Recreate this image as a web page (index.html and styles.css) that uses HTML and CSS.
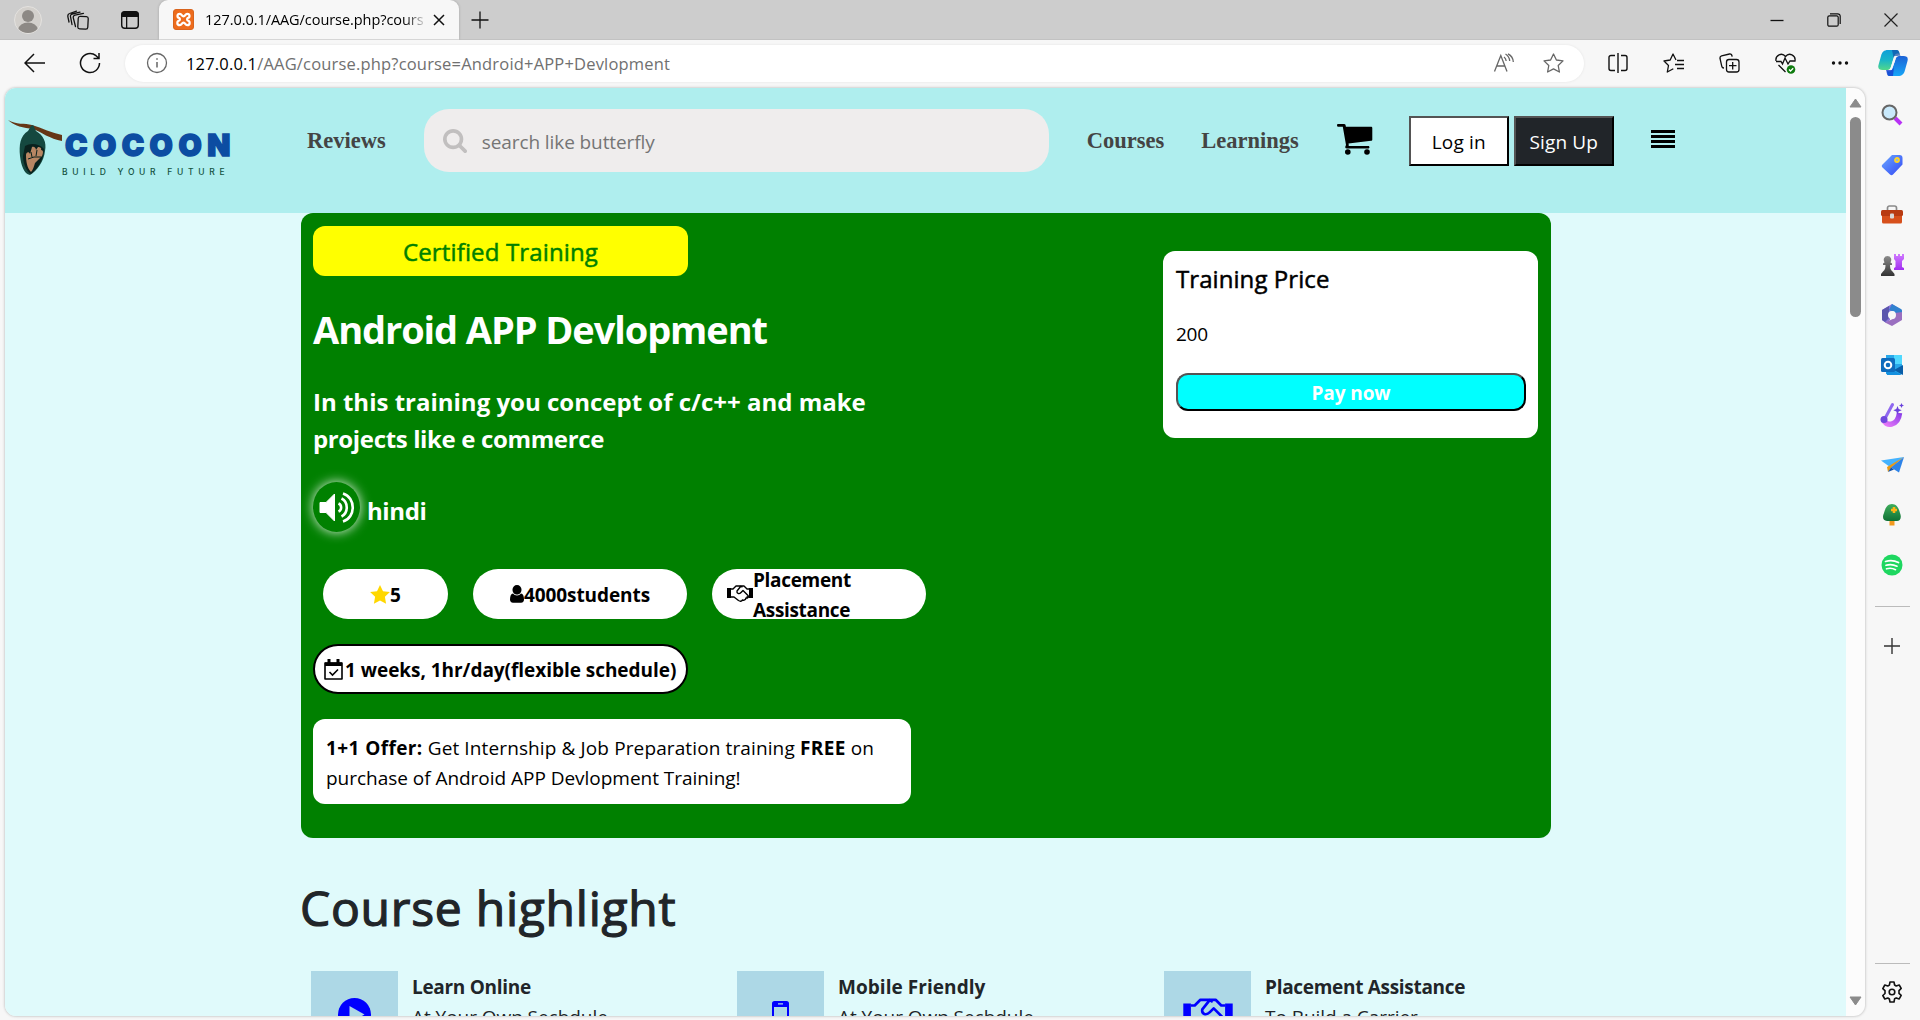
FILE: index.html
```html
<!DOCTYPE html>
<html lang="en">
<head>
<meta charset="utf-8">
<title>127.0.0.1/AAG/course.php</title>
<link rel="stylesheet" href="styles.css">
</head>
<body>
<svg class="defs" width="0" height="0">
  <defs>
    <linearGradient id="gTag" x1="0" y1="0" x2="1" y2="1"><stop offset="0" stop-color="#6aa8ff"/><stop offset="1" stop-color="#3347f5"/></linearGradient>
    <linearGradient id="gPurple" x1="0" y1="0" x2="0" y2="1"><stop offset="0" stop-color="#d07bff"/><stop offset="1" stop-color="#a12ef0"/></linearGradient>
    <linearGradient id="gDesign" x1="0" y1="1" x2="1" y2="0"><stop offset="0" stop-color="#e879f9"/><stop offset="1" stop-color="#8b3fe8"/></linearGradient>
    <linearGradient id="gCopA" x1="0" y1="0" x2="0" y2="1"><stop offset="0" stop-color="#0f9fd8"/><stop offset=".5" stop-color="#19b5c8"/><stop offset="1" stop-color="#52d88a"/></linearGradient>
    <linearGradient id="gCopB" x1="0" y1="0" x2="0" y2="1"><stop offset="0" stop-color="#1c62d6"/><stop offset="1" stop-color="#17a6f7"/></linearGradient>
    <linearGradient id="gPawn" x1="0" y1="0" x2="0" y2="1"><stop offset="0" stop-color="#8c8c8c"/><stop offset="1" stop-color="#333"/></linearGradient>
    <linearGradient id="gTree" x1="0" y1="0" x2="0" y2="1"><stop offset="0" stop-color="#3fae5c"/><stop offset="1" stop-color="#0f7034"/></linearGradient>
    <symbol id="handshake" viewBox="0 0 52 40">
      <path d="M0 8h8v20H0zM44 8h8v20h-8z" fill="currentColor"/>
      <path d="M8 10h4l6-6h9l4 2M44 10h-4l-6-6h-6l-8 10c-1 5 4 7 8 3l4-4 10 10c2 3-1 6-4 5-1 4-4 5-7 4-2 3-5 3-8 1L14 26H8M44 26h-5" fill="none" stroke="currentColor" stroke-width="2.8" stroke-linejoin="round"/>
    </symbol>
  </defs>
</svg>
<div class="browser">
  <div class="tabstrip">
    <svg class="avatar" width="28" height="28" viewBox="0 0 28 28"><circle cx="14" cy="14" r="13.5" fill="#d3d0cc" stroke="#e4e2df"/><circle cx="14" cy="10" r="6" fill="#8d8985"/><path d="M4.500 23a9.500 6.500 0 0 1 19 0 13.500 13.500 0 0 1-19 0z" fill="#8d8985"/></svg>
    <svg class="workspaces" width="22" height="20" viewBox="0 0 22 20" fill="none" stroke="#111" stroke-width="1.300" stroke-linecap="round"><rect x="11" y="6.500" width="10" height="12.500" rx="2" transform="rotate(3 16 13)"/><path d="M8.500 16.500 6.300 7.800a2.200 2.200 0 0 1 1.700-2.700l8.500-1.800M5 14.500 3.500 6.700A2.200 2.200 0 0 1 5.200 4L13 2.200M2 12 .9 6.800c-.3-1.700.3-2.900 1.700-3.300L9.500 1.200"/></svg>
    <svg class="tabmenu" width="20" height="20" viewBox="0 0 20 20"><rect x="1.700" y="1.700" width="16.600" height="16.600" rx="3" fill="none" stroke="#111" stroke-width="1.400"/><path d="M1.500 7V4a2.500 2.500 0 0 1 2.500-2.500h12A2.500 2.500 0 0 1 18.500 4v3zM6 6h1.300v12H6z" fill="#111"/></svg>
    <div class="tab">
      <svg width="21" height="21" viewBox="0 0 21 21"><rect x=".5" y=".5" width="20" height="20" rx="2.500" fill="#ee6c1c" stroke="#d8641d"/><path d="M6.800 4.800c-3 0-3 3.700-.5 4.200.8.500.8 2 0 2.500-2.700.6-2.700 4.700.5 4.700 2.200 0 1.700-2.500 3.700-2.500s1.500 2.500 3.700 2.500c3.200 0 3.200-4.100.5-4.700-.8-.5-.8-2 0-2.500 2.500-.5 2.500-4.200-.5-4.200-2.200 0-1.700 2.500-3.700 2.500S9 4.800 6.800 4.800z" fill="none" stroke="#fff" stroke-width="2.200"/></svg>
      <span class="tab-title">127.0.0.1/AAG/course.php?cours</span>
      <svg class="tab-close" width="12" height="12" viewBox="0 0 12 12" stroke="#111" stroke-width="1.500"><path d="M1 1l10 10M11 1 1 11"/></svg>
    </div>
    <svg class="newtab" width="18" height="18" viewBox="0 0 18 18" stroke="#111" stroke-width="1.300"><path d="M9 .5v17M.5 9h17"/></svg>
    <div class="winctl">
      <svg width="14" height="14" viewBox="0 0 14 14" stroke="#111" stroke-width="1.300"><path d="M.5 7.500h13"/></svg>
      <svg width="14" height="14" viewBox="0 0 14 14" fill="none" stroke="#111" stroke-width="1.200"><rect x=".8" y="2.800" width="10.400" height="10.400" rx="1.500"/><path d="M3 .8h7.700a2.500 2.500 0 0 1 2.500 2.500V11"/></svg>
      <svg width="14" height="14" viewBox="0 0 14 14" stroke="#222" stroke-width="1.200"><path d="M.5.5l13 13M13.500.5l-13 13"/></svg>
    </div>
  </div>

  <div class="toolbar">
    <svg class="back" width="21" height="20" viewBox="0 0 21 20" fill="none" stroke="#111" stroke-width="1.500"><path d="M21 10H1.500M10 1 1 10l9 9"/></svg>
    <svg class="reload" width="22" height="22" viewBox="0 0 22 22" fill="none" stroke="#111" stroke-width="1.500"><path d="M20.500 11a9.500 9.500 0 1 1-3.500-7.300L19.500 6M20 1v5.500h-5.500"/></svg>
    <div class="address">
      <svg width="22" height="22" viewBox="0 0 22 22" fill="none" stroke="#666" stroke-width="1.300"><circle cx="11" cy="11" r="9.500"/><path d="M11 10v5.500M11 6.200v1.600" stroke-width="1.500"/></svg>
      <span class="url"><b>127.0.0.1</b>/AAG/course.php?course=Android+APP+Devlopment</span>
      <svg class="read" width="22" height="20" viewBox="0 0 22 20" fill="none" stroke="#666" stroke-width="1.300"><path d="M1.500 18.500 7.800 2.500l6.200 16M3.800 13h8M12.500 1c2.500 1.500 4 4 4.200 7M15 .8c3.300 1.700 5.200 4.700 5.300 8.200M11 4c1.300 1 2 2.200 2.200 4"/></svg>
      <svg width="21" height="20" viewBox="0 0 21 20" fill="none" stroke="#666" stroke-width="1.300" stroke-linejoin="round"><path d="m10.500 1 2.900 6 6.600.9-4.800 4.600 1.200 6.500-5.900-3.100L4.600 19l1.200-6.500L1 7.900 7.600 7z"/></svg>
    </div>
    <div class="tools">
      <svg width="20" height="20" viewBox="0 0 20 20" fill="none" stroke="#111" stroke-width="1.400"><path d="M10 0v20M7 2.500H3a2 2 0 0 0-2 2v11a2 2 0 0 0 2 2h4M13 2.500h4a2 2 0 0 1 2 2v11a2 2 0 0 1-2 2h-4"/></svg>
      <svg width="21" height="20" viewBox="0 0 21 20" fill="none" stroke="#111" stroke-width="1.300" stroke-linejoin="round"><path d="M13 7 10 1 7.200 7 1 8l4.500 4.500L4.300 19l6-3.200M14 7.500h7M12 11.500h9M14 15.500h7"/></svg>
      <svg width="21" height="20" viewBox="0 0 21 20" fill="none" stroke="#111" stroke-width="1.300"><rect x="7.500" y="6.500" width="12.500" height="12.500" rx="2.500"/><path d="M13.700 9v7.500M10 12.700h7.500M5 15c-1 0-2-.5-2.200-1.700L1 5.500c-.2-1.300.3-2.200 1.600-2.600L10.500 1c1.300-.2 2.300.4 2.700 2.700"/></svg>
      <svg width="21" height="21" viewBox="0 0 21 21" fill="none" stroke="#111" stroke-width="1.300"><path d="M1 8C0 2 7-1 10.500 3.500 14-1 21 2 20 8h-5l-2 3-3-6-2.500 6L6 8.500H1M3.500 12l7 7"/><circle cx="16" cy="16.500" r="4.300" fill="#0f7b0f" stroke="none"/><path d="m14 16.500 1.500 1.500 2.700-2.700" stroke="#fff"/></svg>
      <svg width="18" height="18" viewBox="0 0 18 18" fill="#111"><circle cx="2.500" cy="9" r="1.700"/><circle cx="9" cy="9" r="1.700"/><circle cx="15.500" cy="9" r="1.700"/></svg>
      <svg class="copilot" width="30" height="28" viewBox="0 0 30 28"><path d="M19 1h-9C6 1 4 3 3 7L.5 16c-1 4 1 5 4 5h5c2 0 3-1 4-5l3-9c.5-2 2-3 5-2-.5-3-1.500-4-2.500-4z" fill="url(#gCopA)"/><path d="M11 27h9c4 0 6-2 7-6l2.500-9c1-4-1-5-4-5h-4c-3 0-3.500 1-4.500 5l-3 8c-.7 2-2 3-5 2 .5 3 1 5 2 5z" fill="url(#gCopB)"/><path d="M14 1h5c2 0 2.500 3 3.500 6-3-1-5 0-6.500 4z" fill="#124fa8" opacity=".7"/><path d="M8 21h6l2-3-1 9h-4c-2 0-2-3-3-6z" fill="#163ed0" opacity=".8"/><path d="M17 7h4c-2 0-3 1-3.700 4l-2.800 8c-.5 1.500-1.200 2-2.500 2H9.500c2 0 3-1 4-5l2-7c.3-1.300.7-2 1.500-2z" fill="#f7f7f7"/></svg>
    </div>
  </div>

  <div class="main">
    <div class="frame">
      <div class="page">
        <header class="nav">
          <div class="logo">
            <svg width="55" height="56" viewBox="0 0 55 56"><path d="M0 0c8 5 17 3 24 5 10 3 20 8 30 10v6c-12-2-21-9-29-12C16 8 6 6 0 0z" fill="#653616"/><path d="M23 6c1-1 3-1 3 1l2 4c7 4 11 11 9 20-1 10-8 20-15 24-6-1-9-10-10-19-1-11 0-20 8-25z" fill="#15483f"/><path d="M17 26c5-3 14-3 19 3 0 9-5 18-13 25-5-3-8-11-8-18z" fill="#0a211d"/><path d="M18 35c0-3 3-4 4-1l2-7c2-1 4 1 4 3l2-3c2 0 4 1 3 3 3 0 2 4 1 6l-7 7c-1 3-2 7-4 9-4-4-5-11-5-17z" fill="#b88663"/><path d="M20 39l6-2 7 0M23 32l1 5M29 30l-1 6" stroke="#0a211d" fill="none"/></svg>
            <div class="wordmark"><strong>COCOON</strong><small>BUILD YOUR FUTURE</small></div>
          </div>
          <a class="link reviews">Reviews</a>
          <div class="search">
            <svg width="24" height="24" viewBox="64 128 1664 1664"><path fill="#c1bfbf" d="M1216 832q0-185-131.500-316.500T768 384 451.500 515.500 320 832t131.500 316.500T768 1280t316.500-131.500T1216 832zm512 832q0 52-38 90t-90 38q-54 0-90-38l-343-342q-179 124-399 124-143 0-273.500-55.500t-225-150-150-225T64 832t55.500-273.500 150-225 225-150T768 128t273.500 55.500 225 150 150 225T1472 832q0 220-124 399l343 343q37 37 37 90z"/></svg>
            <span class="placeholder">search like butterfly</span>
          </div>
          <a class="link courses">Courses</a>
          <a class="link learnings">Learnings</a>
          <svg class="cart" width="36" height="31" viewBox="0 0 36 31"><path d="M0 1.200C0 .5.500 0 1.200 0h6c1 0 1.500.7 1.700 2.700H34c.8 0 1.300.5 1.300 1.300v11.500c0 .8-.4 1.200-1.200 1.300L11.500 19.500c.2 1 .4 1.800.2 2.500h19.500c1.700 0 1.700 2.500 0 2.500H10c-2 0-2.300-1.300-1-3.500L5.800 2.700H1.200C.5 2.700 0 2 0 1.200z"/><circle cx="10.800" cy="28" r="2.800"/><circle cx="30" cy="28" r="2.800"/></svg>
          <button class="btn login">Log in</button>
          <button class="btn signup">Sign Up</button>
          <svg class="menu" width="24" height="18" viewBox="0 0 24 18"><path d="M0 0h24v3H0zM0 5h24v3H0zM0 10h24v3H0zM0 15h24v3H0z"/></svg>
        </header>

        <section class="hero">
          <div class="intro">
            <div class="badge">Certified Training</div>
            <h1>Android APP Devlopment</h1>
            <p class="desc">In this training you concept of c/c++ and make<br><span class="tight">projects like e commerce</span></p>
            <div class="lang">
              <span class="speaker"><svg width="36" height="31" viewBox="0 0 36 31"><path d="M1 10.500h6L15.500 2v27L7 20.500H1z" fill="#fff" stroke="#fff" stroke-linejoin="round"/><path d="M19.500 11.500c3.500 1.500 3.500 6.500 0 8M22.500 6.500c7 3.500 7 14.500 0 18M24 1.500c13 4 13 24 0 28" fill="none" stroke="#fff" stroke-width="2.600"/></svg></span>
              <span class="lang-name">hindi</span>
            </div>
            <div class="pills">
              <div class="pill rating"><svg width="20" height="19" viewBox="0 0 20 19"><path fill="gold" d="m10 0 3 6.200 6.900.9-5 4.700 1.200 6.900-6.100-3.300-6.100 3.300 1.200-6.900-5-4.700L7 6.200z"/></svg><span>5</span></div>
              <div class="pill"><svg width="14" height="18" viewBox="0 0 14 18"><path d="M7 0a4.500 4.500 0 0 1 4.500 4.700C11.500 7 10 9.500 7 9.500S2.500 7 2.500 4.700A4.500 4.500 0 0 1 7 0zM3 8.500c2 2.600 6 2.600 8 0 2 .3 3 2.500 3 6 0 2-1 3.200-3 3.200H3c-2 0-3-1.200-3-3.200 0-3.500 1-5.700 3-6z"/></svg><span>4000students</span></div>
              <div class="pill placement"><svg width="26" height="20"><use href="#handshake"/></svg><span>Placement<br>Assistance</span></div>
            </div>
            <div class="schedule"><svg width="19" height="21" viewBox="0 0 19 21"><path d="M1 4h17v16H1z" fill="none" stroke="#000" stroke-width="1.600" stroke-linejoin="round"/><path d="M1 3.500h17V7H1zM3.500 0h3v5h-3zM12.500 0h3v5h-3z"/><path d="m5.500 13 3 3 5.500-5.500" fill="none" stroke="#000" stroke-width="1.600"/></svg><span>1 weeks, 1hr/day(flexible schedule)</span></div>
            <p class="offer"><span class="loose"><b>1+1 Offer:</b> Get Internship &amp; Job Preparation training <b>FREE</b> on</span><br>purchase of Android APP Devlopment Training!</p>
          </div>
          <aside class="price">
            <h2>Training Price</h2>
            <p>200</p>
            <button class="pay">Pay now</button>
          </aside>
        </section>

        <section class="highlights">
          <h2>Course highlight</h2>
          <div class="grid">
            <div class="item"><div class="tile"><svg width="33" height="33" viewBox="0 0 33 33"><circle cx="16.500" cy="16.500" r="16.500"/><path d="M11.500 8v17l15-8.500z" fill="#add8e6"/></svg></div><div class="copy"><b>Learn Online</b><span>At Your Own Sechdule</span></div></div>
            <div class="item"><div class="tile"><svg width="17" height="28" viewBox="0 0 17 28"><path fill-rule="evenodd" d="M2.500 0h12A2.500 2.500 0 0 1 17 2.500v23a2.500 2.500 0 0 1-2.500 2.500h-12A2.500 2.500 0 0 1 0 25.500v-23A2.500 2.500 0 0 1 2.500 0zM2 6v16h13V6zM6 2.200v1.200h5V2.200z"/></svg></div><div class="copy"><b class="even">Mobile Friendly</b><span>At Your Own Sechdule</span></div></div>
            <div class="item"><div class="tile"><svg width="50" height="38"><use href="#handshake"/></svg></div><div class="copy"><b>Placement Assistance</b><span>To Build a Carrier</span></div></div>
          </div>
        </section>
      </div>
      <div class="scrollbar">
        <svg width="13" height="10" viewBox="0 0 13 10"><path d="M6.500 1 12 9H1z" fill="#8b8b8b" stroke="#8b8b8b" stroke-linejoin="round"/></svg>
        <div class="thumb"></div>
        <svg class="down" width="13" height="10" viewBox="0 0 13 10"><path d="M6.500 9 12 1H1z" fill="#8b8b8b" stroke="#8b8b8b" stroke-linejoin="round"/></svg>
      </div>
    </div>

    <nav class="sidebar">
      <div class="cell"><svg width="22" height="22" viewBox="0 0 22 22"><path d="m14 14 6 6" stroke="#b832f5" stroke-width="4"/><circle cx="8.500" cy="8.500" r="7" fill="#c9e9fb" stroke="#666" stroke-width="2"/></svg></div>
      <div class="cell"><svg width="22" height="22" viewBox="0 0 22 22"><path d="M11 1h7.500a3 3 0 0 1 3 3v6.500L12 20.500c-1 1-2 1-3 0L1.500 13.500c-1-1-1-2 0-3z" fill="url(#gTag)"/><circle cx="16" cy="6" r="2" fill="#7fb0ff" stroke="#ffd428" stroke-width="1.800"/></svg></div>
      <div class="cell"><svg width="24" height="20" viewBox="0 0 24 20"><path d="M7.500 5V3a2 2 0 0 1 2-2h5a2 2 0 0 1 2 2v2" fill="none" stroke="#8a8a8a" stroke-width="1.700"/><path d="M2 9h20v8a1.500 1.500 0 0 1-1.500 1.500h-17A1.500 1.500 0 0 1 2 17z" fill="#d7501c"/><rect x="1" y="5" width="22" height="6" rx="1.500" fill="#b83b12"/><rect x="10" y="8.500" width="4" height="5" rx="1" fill="#d9d9d9"/></svg></div>
      <div class="cell"><svg width="24" height="24" viewBox="0 0 24 24"><path d="M14 1h2v2h2V1h2v2h2V1h2v5l-2 2v6l2 1v2H14v-2l1.500-1V8L14 6z" fill="url(#gPurple)"/><path d="M7.500 3a4 4 0 0 1 3 6.500l1.500 1v1.500H10c0 3 .5 5 2.500 6.500l2 2.500v2H1v-2l2-2.500c2-1.500 2.500-3.500 2.500-6.500H3v-1.500l1.500-1A4 4 0 0 1 7.500 3z" fill="url(#gPawn)"/></svg></div>
      <div class="cell"><svg width="22" height="22" viewBox="0 0 22 22"><path d="M11 0 1 6v10l4 3 4-3V8l9-3.500z" fill="#8b74d8"/><path d="M11 0l9 5c1 1 1 1 1 2v8l-7-3V8L8 6z" fill="#3181cf"/><path d="M21 8v8l-10 6-7-3.500L14 14V9z" fill="#9a6fc0"/><path d="M1 6l7-4v12l-4 4-3-2z" fill="#5b56ad"/><circle cx="11" cy="11" r="4" fill="#f7f7f7"/></svg></div>
      <div class="cell"><svg width="22" height="22" viewBox="0 0 22 22"><path d="M5 1h16v19H5z" fill="#28a8ea"/><path d="M13 1h8v9h-8z" fill="#50d9ff"/><path d="m22 11-9 5 9 5z" fill="#0a5ea8"/><path d="M4 12l17 9H6z" fill="#1490df"/><rect y="4" width="14" height="14" rx="1.500" fill="#0f6cbd"/><circle cx="7" cy="11" r="3.300" fill="none" stroke="#fff" stroke-width="2"/></svg></div>
      <div class="cell"><svg width="24" height="26" viewBox="0 0 24 26"><path d="M3.500 17c1.500 8 14.500 7.500 16-6" fill="none" stroke="url(#gDesign)" stroke-width="5.500"/><path d="m12.500 2.500-7 13" stroke="#8f68f0" stroke-width="3" stroke-linecap="round"/><circle cx="4" cy="17.500" r="3.500" fill="#6f48dd"/><path d="m17.500 4 1.200 3 3 1.200-3 1.200-1.200 3-1.200-3-3-1.200 3-1.200zM21.500 1l.8 1.700 1.700.8-1.700.8-.8 1.700-.8-1.700-1.700-.8 1.700-.8z" fill="#6a42dc"/></svg></div>
      <div class="cell"><svg width="23" height="20" viewBox="0 0 23 20"><path d="M0 5.500 23 2 9 12z" fill="#45b3ff"/><path d="M23 2 6 12l1 5 3-4z" fill="#e89a16"/><path d="M23 2 10 12.500l8 5z" fill="#2d83e8"/><path d="m7 17 3-4.500 3 2z" fill="#1452a8"/></svg></div>
      <div class="cell"><svg width="20" height="24" viewBox="0 0 20 24"><path d="M7.500 16h5v6.500h-5z" fill="#f29a1f"/><path d="M10 1c5 0 7 5 8 9 2 5 0 8-3 8H5c-4 0-5-4-3-8 1-4 3-9 8-9z" fill="url(#gTree)"/><path d="M12 4v6M9 7h6" stroke="#ffb516" stroke-width="2.600"/></svg></div>
      <div class="cell"><svg width="22" height="22" viewBox="0 0 22 22"><circle cx="11" cy="11" r="10.500" fill="#1ed760"/><path d="M4.500 7.500c4.500-1.500 9-1 13 1M5 11.300c4-1.300 7.500-.8 11 .9M5.500 14.800c3-.9 6.300-.6 9 .9" fill="none" stroke="#fff" stroke-width="1.700" stroke-linecap="round"/></svg></div>
      <hr>
      <svg class="add" width="16" height="16" viewBox="0 0 16 16" stroke="#333" stroke-width="1.400"><path d="M8 0v16M0 8h16"/></svg>
      <hr class="low">
      <svg class="gear" width="22" height="22" viewBox="0 0 22 22" fill="none" stroke="#111" stroke-width="1.600" stroke-linejoin="round"><path d="M9 1h4l.6 3 1.600 1 3-1 2 3.400L18 9.600v2.800l2.200 2-2 3.500-3-1-1.600.9L13 21H9l-.6-3-1.600-1-3 1-2-3.500 2.200-2V9.600l-2.200-2L3.800 4l3 1 1.600-.9z"/><circle cx="11" cy="11" r="2.800"/></svg>
    </nav>
  </div>
</div>
</body>
</html>
```
FILE: styles.css
```css
* { box-sizing: border-box; }
body { margin: 0; font-family: "Open Sans", "Noto Sans", sans-serif; overflow: hidden; }
h1, h2, p { margin: 0; }
svg { flex: none; display: block; }
.defs { position: absolute; }
.browser { width: 1920px; height: 1020px; background: #f7f7f7; display: flex; flex-direction: column; }

.tabstrip { height: 40px; background: #cdcdcd; display: flex; align-items: center; border-bottom: 1px solid #c2c2c2; }
.avatar { margin-left: 14px; }
.workspaces { margin-left: 25px; }
.tabmenu { margin-left: 31px; }
.tab { width: 300px; height: 40px; margin-left: 19px; padding-left: 14px; background: #f7f7f7; border-radius: 9px 9px 0 0; display: flex; align-items: center; box-shadow: 0 0 3px rgba(0,0,0,.2); clip-path: inset(0 -4px 0 -4px); }
.tab-title { width: 219px; margin-left: 11px; font-size: 14.500px; letter-spacing: -.06px; white-space: nowrap; overflow: hidden; mask-image: linear-gradient(90deg, #000 91%, rgba(0,0,0,.15)); }
.tab-close { margin-left: 9px; }
.newtab { margin-left: 12px; }
.winctl { display: flex; gap: 43px; margin-left: auto; padding-right: 22px; }

.toolbar { height: 48px; display: flex; align-items: center; padding: 0 12px 2px 24px; }
.reload { margin-left: 34px; }
.address { width: 1460px; height: 37px; margin-left: 24px; padding: 0 20px 0 21px; border-radius: 19px; background: #fff; display: flex; align-items: center; box-shadow: 0 0 3px rgba(0,0,0,.08); }
.url { margin-left: 18px; font-size: 16.500px; letter-spacing: .18px; color: #707070; white-space: nowrap; }
.url b { color: #000; font-weight: 400; }
.read { margin-left: auto; margin-right: 28px; }
.tools { display: flex; align-items: center; gap: 35px; margin-left: 24px; }
.copilot { margin-left: -6px; }

.main { display: flex; height: 932px; }
.frame { width: 1860px; height: 928px; margin-left: 5px; border-radius: 11px; overflow: hidden; display: flex; background: #fcfcfc; box-shadow: 0 0 3px rgba(0,0,0,.3); }
.page { width: 1841px; height: 928px; background: #e0fafb; overflow: hidden; }
.scrollbar { width: 19px; display: flex; flex-direction: column; align-items: center; padding: 10px 0; }
.thumb { width: 11px; height: 200px; margin-top: 9px; border-radius: 6px; background: #8b8b8b; }
.down { margin-top: auto; }

.nav { height: 125px; background: #afeeee; display: flex; align-items: flex-start; }
.logo { display: flex; width: 226px; margin: 32px 0 0 3px; }
.wordmark { display: flex; flex-direction: column; white-space: nowrap; }
.wordmark strong { font: 900 30px/30px Inter, sans-serif; letter-spacing: 5.500px; color: #0c4da2; -webkit-text-stroke: 1.500px #0c4da2; margin: 10px 0 0 2px; }
.wordmark small { font: 500 8.500px/12px Inter, sans-serif; letter-spacing: 4.700px; color: #14523f; margin: 6px 0 0 -1px; }
.link { font: bold 22.500px/30px "Liberation Serif", serif; color: #444; margin-top: 38px; }
.reviews { margin-left: 73px; }
.search { width: 625px; height: 63px; margin: 21px 0 0 38px; padding-left: 19px; border-radius: 25px; background: #efeded; display: flex; align-items: center; gap: 15px; font-size: 19px; color: #757575; }
.placeholder { padding-top: 2px; letter-spacing: -.09px; }
.courses { margin-left: 38px; }
.learnings { margin-left: 37px; }
.cart { margin: 36px 0 0 38px; }
.btn { width: 100px; height: 50px; margin-top: 28px; padding: 2px 0 0; font: 19px/30px "Open Sans", sans-serif; letter-spacing: .15px; border: 2px outset #000; white-space: nowrap; }
.login { margin-left: 36px; background: #fff; color: #000; }
.signup { margin-left: 5px; background: #212529; color: #fff; }
.menu { margin: 42px 0 0 37px; }

.hero { width: 1250px; height: 625px; margin-left: 296px; padding: 13px 13px 0 12px; border-radius: 12px; background: green; display: flex; justify-content: space-between; }
.badge { width: 375px; height: 50px; border-radius: 12px; background: #ff0; color: green; font-size: 24px; letter-spacing: .14px; -webkit-text-stroke: .5px; line-height: 51px; text-align: center; }
.intro h1 { margin-top: 29px; font-size: 38px; line-height: 48px; letter-spacing: -1.090px; color: #fff; }
.desc { margin-top: 30px; font-size: 24px; line-height: 37px; font-weight: 700; color: #fff; white-space: nowrap; }
.tight { letter-spacing: -.36px; }
.lang { display: flex; align-items: center; gap: 7px; height: 50px; margin-top: 25px; color: #fff; font-size: 24px; font-weight: 700; letter-spacing: -.4px; }
.lang-name { padding-top: 7px; }
.speaker { width: 47px; height: 50px; border-radius: 50%; display: flex; align-items: center; justify-content: center; box-shadow: 0 0 12px rgba(255,255,255,.9); }
.pills { display: flex; gap: 25px; margin: 37px 0 0 10px; }
.pill { width: 214px; height: 50px; border-radius: 25px; background: #fff; display: flex; align-items: center; justify-content: center; font-size: 19px; line-height: 30px; font-weight: 700; letter-spacing: -.09px; }
.pill span { padding-top: 2px; }
.rating { width: 125px; }
.placement { justify-content: flex-start; padding-left: 15px; letter-spacing: -.330px; }
.schedule { width: 375px; height: 50px; margin-top: 25px; padding-left: 9px; border: 2px solid #000; border-radius: 25px; background: #fff; display: flex; align-items: center; gap: 2px; font-size: 19px; font-weight: 700; letter-spacing: -.04px; white-space: nowrap; }
.schedule span { padding-top: 2px; }
.offer { width: 598px; height: 85px; margin-top: 25px; padding: 14px 12px 0 13px; border-radius: 12px; background: #fff; font-size: 19px; line-height: 30px; letter-spacing: -.03px; white-space: nowrap; }
.loose { letter-spacing: .12px; }
.loose b { letter-spacing: .4px; }
.price { width: 375px; height: 187px; margin-top: 25px; padding: 13px 12px 0 13px; border-radius: 12px; background: #fff; }
.price h2 { font-size: 24px; line-height: 30px; font-weight: 400; letter-spacing: .07px; -webkit-text-stroke: .5px; }
.price p { margin-top: 25px; font-size: 19px; line-height: 30px; letter-spacing: -.3px; }
.pay { display: block; width: 350px; height: 38px; margin-top: 24px; padding: 2px 0 0; border: 2px outset #000; border-radius: 12px; background: #0ff; color: #fff; font: 700 19px/30px "Open Sans", sans-serif; letter-spacing: -.1px; }

.highlights { margin-left: 296px; color: #212529; }
.highlights h2 { margin: 40px 0 0 -1px; font-size: 48px; line-height: 60px; font-weight: 400; letter-spacing: .750px; -webkit-text-stroke: 1.200px; }
.grid { display: grid; grid-template-columns: 426px 427px 427px; margin: 33px 0 0 10px; }
.item { display: flex; gap: 14px; }
.tile { width: 87px; height: 87px; background: #add8e6; color: #00f; fill: #00f; display: flex; align-items: center; justify-content: center; }
.copy { display: flex; flex-direction: column; padding-top: 1px; font-size: 19px; line-height: 30px; letter-spacing: -.05px; white-space: nowrap; }
.copy b { letter-spacing: -.3px; }
.copy .even { letter-spacing: .05px; }

.sidebar { width: 54px; padding-top: 2px; display: flex; flex-direction: column; align-items: center; }
.cell { height: 50px; display: flex; align-items: center; }
.sidebar hr { width: 35px; height: 1px; margin: 16px 0 0; border: 0; background: #bbb; }
.add { margin-top: 31px; }
.sidebar .low { margin-top: auto; }
.gear { margin: 17px 0 17px; }
```
